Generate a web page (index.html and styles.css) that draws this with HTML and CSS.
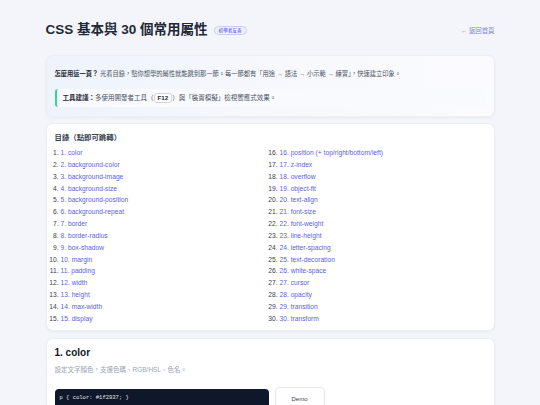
FILE: index.html
```html
<!DOCTYPE html>
<html lang="zh-Hant">
<head>
<meta charset="utf-8">
<title>CSS 基本與 30 個常用屬性</title>
<link rel="stylesheet" href="styles.css">
</head>
<body>
<div class="page">
  <header class="top">
    <div class="title-wrap">
      <h1 class="title">CSS 基本與 30 個常用屬性</h1>
      <span class="badge">初學者友善</span>
    </div>
    <a class="back" href="#">← 返回首頁</a>
  </header>

  <section class="card intro">
    <p class="how"><b>怎麼用這一頁？</b> 光看目錄，點你想學的屬性就能跳到那一節。每一節都有「用途 → 語法 → 小示範 → 練習」，快速建立印象。</p>
    <div class="tip"><b>工具建議：</b>多使用開發者工具（<kbd>F12</kbd>）與「裝置模擬」檢視響應式效果。</div>
  </section>

  <section class="card toc">
    <h2 class="toc-title">目錄（點即可跳轉）</h2>
    <ol class="toc-list">
      <li><a href="#">1. color</a></li>
      <li><a href="#">2. background-color</a></li>
      <li><a href="#">3. background-image</a></li>
      <li><a href="#">4. background-size</a></li>
      <li><a href="#">5. background-position</a></li>
      <li><a href="#">6. background-repeat</a></li>
      <li><a href="#">7. border</a></li>
      <li><a href="#">8. border-radius</a></li>
      <li><a href="#">9. box-shadow</a></li>
      <li><a href="#">10. margin</a></li>
      <li><a href="#">11. padding</a></li>
      <li><a href="#">12. width</a></li>
      <li><a href="#">13. height</a></li>
      <li><a href="#">14. max-width</a></li>
      <li><a href="#">15. display</a></li>
      <li><a href="#">16. position (+ top/right/bottom/left)</a></li>
      <li><a href="#">17. z-index</a></li>
      <li><a href="#">18. overflow</a></li>
      <li><a href="#">19. object-fit</a></li>
      <li><a href="#">20. text-align</a></li>
      <li><a href="#">21. font-size</a></li>
      <li><a href="#">22. font-weight</a></li>
      <li><a href="#">23. line-height</a></li>
      <li><a href="#">24. letter-spacing</a></li>
      <li><a href="#">25. text-decoration</a></li>
      <li><a href="#">26. white-space</a></li>
      <li><a href="#">27. cursor</a></li>
      <li><a href="#">28. opacity</a></li>
      <li><a href="#">29. transition</a></li>
      <li><a href="#">30. transform</a></li>
    </ol>
  </section>

  <section class="card prop">
    <h2 class="prop-title">1. color</h2>
    <p class="prop-desc">設定文字顏色，支援色碼、RGB/HSL、色名。</p>
    <div class="example">
      <pre class="code">p { color: #1f2937; }</pre>
      <div class="demo">Demo</div>
    </div>
  </section>
</div>
</body>
</html>
```

FILE: styles.css
```css
* { box-sizing: border-box; }

html, body {
  margin: 0;
  padding: 0;
}

body {
  background: #f4f5fa;
  font-family: "Liberation Sans", "Noto Sans CJK TC", sans-serif;
  color: #1f2937;
  overflow: hidden;
}

.page {
  width: 449px;
  margin: 0 auto;
  padding-top: 18px;
}

.top {
  height: 24px;
  display: flex;
  align-items: center;
  justify-content: space-between;
  margin-bottom: 13px;
}

.title-wrap {
  display: flex;
  align-items: center;
  gap: 6px;
}

.title {
  margin: 0;
  font-size: 13.5px;
  font-weight: 700;
  color: #1f2937;
  line-height: 1;
}

.badge {
  font-size: 4.6px;
  line-height: 6px;
  padding: 0.5px 4px;
  border-radius: 6px;
  background: #eef0ff;
  border: 0.6px solid #c9cdf6;
  color: #4f46e5;
  margin-top: 1px;
}

.back {
  font-size: 6.4px;
  color: #7f84d6;
  text-decoration: none;
  margin-top: 1px;
}

.card {
  background: #fff;
  border: 1px solid #eceef4;
  border-radius: 7px;
  box-shadow: 0 1px 3px rgba(30, 41, 80, 0.05);
  margin-bottom: 6px;
}

.intro {
  background: linear-gradient(90deg, #eef3fc 0%, #f8f9fd 60%, #fbfbfe 100%);
  padding: 12px 8px 9px;
}

.how {
  margin: 0;
  font-size: 6.25px;
  line-height: 12px;
  color: #4b5563;
}

.how b {
  color: #1f2937;
  font-weight: 700;
}

.tip {
  margin-top: 9px;
  background: #f9fafd;
  border-left: 2px solid #34d399;
  border-radius: 3px;
  padding: 4px 6px;
  font-size: 6.5px;
  line-height: 10px;
  color: #4b5563;
}

.tip b {
  color: #1f2937;
  font-weight: 700;
}

kbd {
  display: inline-block;
  font-family: "Liberation Sans", sans-serif;
  font-size: 6.2px;
  line-height: 8px;
  padding: 0 3px;
  border: 0.6px solid #d1d5db;
  border-radius: 3px;
  background: #fff;
  color: #1f2937;
  font-weight: 700;
}

.toc {
  padding: 8px 8px 5px;
}

.toc-title {
  margin: 0 0 4px;
  font-size: 7.4px;
  line-height: 11px;
  font-weight: 600;
  color: #374151;
}

.toc-list {
  margin: 0;
  padding-left: 6px;
  columns: 2;
  column-gap: 13px;
  font-size: 6.7px;
  line-height: 11.85px;
  color: #374151;
}

.toc-list a {
  color: #5b5fe0;
  text-decoration: none;
}

.prop {
  margin-top: 7px;
  padding: 7px 8px 8px;
}

.prop-title {
  margin: 0;
  font-size: 10px;
  line-height: 14px;
  font-weight: 700;
  color: #111827;
}

.prop-desc {
  margin: 4px 0 0;
  font-size: 6.5px;
  line-height: 12px;
  color: #9ca3af;
}

.example {
  margin-top: 11px;
  display: flex;
  align-items: flex-start;
  gap: 6px;
}

.code {
  margin: 2px 0 0;
  width: 214px;
  height: 40px;
  background: #0f172a;
  border-radius: 4px;
  padding: 5px 5px;
  color: #e5e7eb;
  font-family: "Liberation Mono", monospace;
  font-size: 5.5px;
  line-height: 8px;
}

.demo {
  width: 50px;
  height: 40px;
  background: #fff;
  border: 0.6px solid #e5e7eb;
  border-radius: 4px;
  font-size: 6px;
  color: #374151;
  text-align: center;
  padding-top: 7px;
  line-height: 8px;
}
```
